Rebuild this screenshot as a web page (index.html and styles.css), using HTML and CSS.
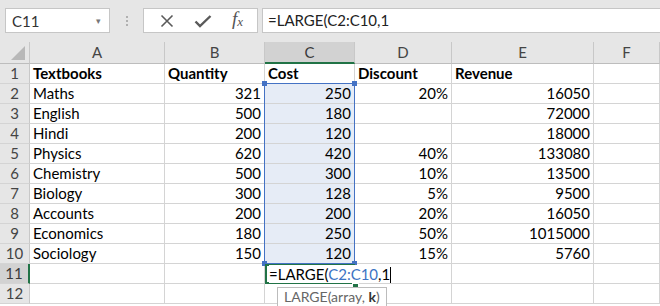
FILE: index.html
```html
<!DOCTYPE html>
<html lang="en">
<head>
    <meta charset="UTF-8">
    <title>LARGE function</title>
    <link rel="stylesheet" href="styles.css">
</head>
<body>
    <div class="toolbar">
        <div class="name-box">
            <span>C11</span>
            <span class="drop">&#9662;</span>
        </div>
        <div class="grip"><i></i><i></i><i></i></div>
        <div class="fx-group">
            <svg width="14" height="14" viewBox="0 0 14 14"><path d="M1.5 1.5 L12.5 12.5 M12.5 1.5 L1.5 12.5" stroke="#5a5a5a" stroke-width="1.6" fill="none"/></svg>
            <svg width="18" height="14" viewBox="0 0 18 14"><path d="M1.5 7.5 L6 12 L16.5 2" stroke="#5a5a5a" stroke-width="2.4" fill="none"/></svg>
            <span class="fx">f<sub>x</sub></span>
        </div>
        <div class="formula-box">=LARGE(C2:C10,1</div>
    </div>

    <div class="sheet">
        <div class="corner"><span class="tri"></span></div>
        <div class="colh">A</div>
        <div class="colh">B</div>
        <div class="colh active">C</div>
        <div class="colh">D</div>
        <div class="colh">E</div>
        <div class="colh">F</div>

        <div class="rowh">1</div>
        <div class="cell b">Textbooks</div><div class="cell b">Quantity</div><div class="cell b">Cost</div><div class="cell b">Discount</div><div class="cell b">Revenue</div><div class="cell"></div>

        <div class="rowh">2</div>
        <div class="cell">Maths</div><div class="cell n">321</div><div class="cell n rng">250</div><div class="cell n">20%</div><div class="cell n">16050</div><div class="cell"></div>

        <div class="rowh">3</div>
        <div class="cell">English</div><div class="cell n">500</div><div class="cell n rng">180</div><div class="cell n"></div><div class="cell n">72000</div><div class="cell"></div>

        <div class="rowh">4</div>
        <div class="cell">Hindi</div><div class="cell n">200</div><div class="cell n rng">120</div><div class="cell n"></div><div class="cell n">18000</div><div class="cell"></div>

        <div class="rowh">5</div>
        <div class="cell">Physics</div><div class="cell n">620</div><div class="cell n rng">420</div><div class="cell n">40%</div><div class="cell n">133080</div><div class="cell"></div>

        <div class="rowh">6</div>
        <div class="cell">Chemistry</div><div class="cell n">500</div><div class="cell n rng">300</div><div class="cell n">10%</div><div class="cell n">13500</div><div class="cell"></div>

        <div class="rowh">7</div>
        <div class="cell">Biology</div><div class="cell n">300</div><div class="cell n rng">128</div><div class="cell n">5%</div><div class="cell n">9500</div><div class="cell"></div>

        <div class="rowh">8</div>
        <div class="cell">Accounts</div><div class="cell n">200</div><div class="cell n rng">200</div><div class="cell n">20%</div><div class="cell n">16050</div><div class="cell"></div>

        <div class="rowh">9</div>
        <div class="cell">Economics</div><div class="cell n">180</div><div class="cell n rng">250</div><div class="cell n">50%</div><div class="cell n">1015000</div><div class="cell"></div>

        <div class="rowh">10</div>
        <div class="cell">Sociology</div><div class="cell n">150</div><div class="cell n rng">120</div><div class="cell n">15%</div><div class="cell n">5760</div><div class="cell"></div>

        <div class="rowh active">11</div>
        <div class="cell"></div><div class="cell"></div><div class="cell edit"><span class="edit-text">=LARGE(<span class="ref">C2:C10</span>,1<span class="caret"></span></span></div><div class="cell"></div><div class="cell"></div><div class="cell"></div>

        <div class="rowh">12</div>
        <div class="cell"></div><div class="cell"></div><div class="cell"></div><div class="cell"></div><div class="cell"></div><div class="cell"></div>

        <div class="range-box">
            <i class="h tl"></i><i class="h tr"></i><i class="h bl"></i><i class="h br"></i>
        </div>
        <div class="fill-handle"></div>
        <div class="tip">LARGE(array, <b>k</b>)</div>
    </div>
</body>
</html>
```

FILE: styles.css
```css
body {
    margin: 0;
    width: 660px;
    height: 306px;
    overflow: hidden;
    background: #fff;
    font-family: 'Lato', 'Liberation Sans', sans-serif;
    color: #000;
}
.toolbar {
    height: 42px;
    background: #e6e6e6;
    display: flex;
    align-items: flex-start;
    padding-top: 8px;
    box-sizing: border-box;
}
.name-box {
    margin-left: 5px;
    width: 105px;
    height: 25px;
    box-sizing: border-box;
    background: #fff;
    border: 1px solid #c6c6c6;
    display: flex;
    align-items: center;
    justify-content: space-between;
    padding: 0 8px 0 6px;
    font-size: 15px;
    color: #333;
}
.drop {
    font-size: 9px;
    color: #777;
}
.grip {
    width: 33px;
    height: 25px;
    display: flex;
    flex-direction: column;
    align-items: center;
    justify-content: center;
    gap: 2px;
}
.grip i {
    width: 2px;
    height: 2px;
    background: #b0b0b0;
}
.fx-group {
    width: 115px;
    height: 25px;
    box-sizing: border-box;
    background: #fff;
    border: 1px solid #c6c6c6;
    display: flex;
    align-items: center;
    justify-content: space-around;
    padding: 0 4px 0 6px;
}
.fx {
    font-family: 'Liberation Serif', serif;
    font-style: italic;
    font-size: 19px;
    line-height: 20px;
    color: #555;
}
.fx sub {
    font-size: 13px;
    vertical-align: -1px;
}
.formula-box {
    margin-left: 4px;
    flex: 1;
    height: 25px;
    box-sizing: border-box;
    background: #fff;
    border: 1px solid #c6c6c6;
    border-right: none;
    padding-left: 5px;
    font-size: 15px;
    line-height: 23px;
    color: #222;
}
.sheet {
    position: relative;
    display: grid;
    grid-template-columns: 30px 135px 100px 90px 97px 142px 66px;
    grid-template-rows: 22px repeat(12, 20px);
}
.corner, .colh, .rowh {
    background: #e6e6e6;
    color: #444;
    font-size: 15px;
    box-sizing: border-box;
    border-right: 1px solid #c8c8c8;
    border-bottom: 1px solid #bdbdbd;
}
.corner {
    position: relative;
}
.tri {
    position: absolute;
    right: 4px;
    bottom: 3px;
    width: 0;
    height: 0;
    border-left: 14px solid transparent;
    border-bottom: 14px solid #b8b8b8;
}
.colh {
    text-align: center;
    line-height: 21px;
}
.colh.active {
    background: #d2d2d2;
    color: #3a3a3a;
    border-bottom: 2px solid #217346;
    line-height: 20px;
}
.rowh {
    text-align: center;
    line-height: 19px;
    border-bottom: 1px solid #d4d4d4;
}
.rowh.active {
    background: #d2d2d2;
    color: #3a3a3a;
    border-right: 2px solid #217346;
}
.cell {
    box-sizing: border-box;
    border-right: 1px solid #d4d4d4;
    border-bottom: 1px solid #d4d4d4;
    font-size: 15px;
    line-height: 19px;
    padding: 0 3px 0 3px;
    white-space: nowrap;
}
.cell.b {
    font-weight: bold;
}
.cell.n {
    text-align: right;
}
.cell.rng {
    background: #e6ecf6;
}
.cell.edit {
    position: relative;
    overflow: visible;
    border: 2px solid #217346;
    line-height: 17px;
    padding-left: 2px;
    z-index: 2;
}
.edit-text {
    background: #fff;
    padding-right: 1px;
}
.ref {
    color: #3d74c4;
}
.caret {
    display: inline-block;
    width: 1px;
    height: 16px;
    background: #000;
    vertical-align: -3px;
}
.range-box {
    position: absolute;
    left: 264px;
    top: 41px;
    width: 91px;
    height: 181px;
    box-sizing: border-box;
    border: 1.5px solid #4472c4;
    pointer-events: none;
}
.range-box .h {
    position: absolute;
    width: 5px;
    height: 5px;
    background: #4472c4;
}
.h.tl { left: -3px; top: -3px; }
.h.tr { right: -3px; top: -3px; }
.h.bl { left: -3px; bottom: -3px; }
.h.br { right: -3px; bottom: -3px; }
.fill-handle {
    position: absolute;
    left: 352px;
    top: 241px;
    width: 5px;
    height: 5px;
    background: #217346;
    border: 1px solid #fff;
    z-index: 3;
}
.tip {
    position: absolute;
    left: 277px;
    top: 245px;
    height: 20px;
    box-sizing: border-box;
    background: #fff;
    border: 1px solid #bcbcbc;
    padding: 0 6px;
    font-size: 14px;
    line-height: 18px;
    color: #666;
    z-index: 4;
}
.tip b {
    color: #333;
}
```
